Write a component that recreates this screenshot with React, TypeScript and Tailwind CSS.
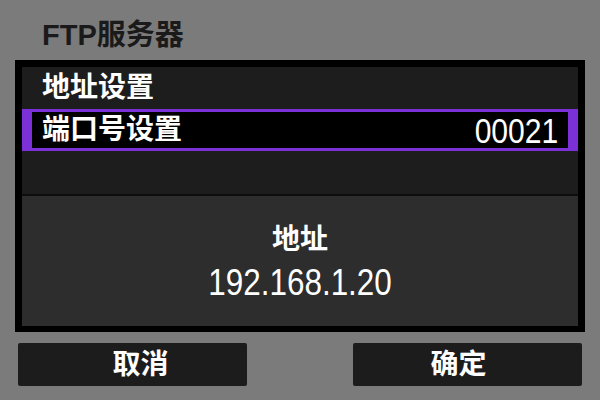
import React from 'react';

const cjk = "font-['Liberation_Sans','Noto_Sans_CJK_SC',sans-serif]";

export default function App() {
  return (
    <div className={`w-[600px] h-[400px] bg-[#7b7b7b] overflow-hidden ${cjk}`}>
      <div className="h-[60px] pl-[42px] pt-[21px] text-[29px] leading-none font-bold text-[#1a1a1a]">
        FTP服务器
      </div>

      <div className="mx-[15px] h-[272px] border-[7px] border-b-[6px] border-black flex flex-col">
        <div className="h-[42px] bg-[#1d1d1d] flex items-center pl-[20px] text-[28px] leading-none font-bold text-white">
          地址设置
        </div>
        <div className="h-[42px] bg-black border-y-[3px] border-x-[10px] border-[#7b30d8] flex items-center justify-between pl-[10px] pr-[10px] text-white">
          <span className="text-[28px] leading-none font-bold">端口号设置</span>
          <span className="inline-block text-[35px] leading-none scale-x-[0.86] origin-right">00021</span>
        </div>
        <div className="h-[43px] bg-[#1d1d1d]" />
        <div className="h-[2px] bg-[#0d0d0d]" />
        <div className="flex-1 bg-[#2d2d2d] flex flex-col items-center justify-center gap-[10px] text-white pt-[4px]">
          <span className="text-[28px] leading-none font-bold">地址</span>
          <span className="inline-block text-[37px] leading-none scale-x-[0.85]">192.168.1.20</span>
        </div>
      </div>

      <div className="mt-[11px] px-[18px] flex justify-between">
        <div className="w-[229px] h-[43px] bg-[#1c1c1c] rounded-[2px] flex items-center justify-center pl-[16px] text-[28px] leading-none font-bold text-white">
          取消
        </div>
        <div className="w-[229px] h-[43px] bg-[#1c1c1c] rounded-[2px] flex items-center justify-center pr-[18px] text-[28px] leading-none font-bold text-white">
          确定
        </div>
      </div>
    </div>
  );
}
